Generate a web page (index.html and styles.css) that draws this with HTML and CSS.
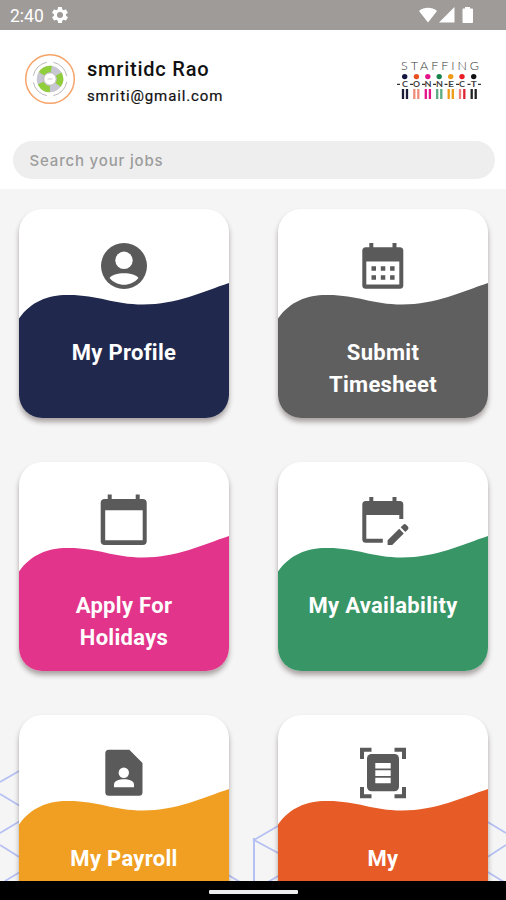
FILE: index.html
```html
<!DOCTYPE html>
<html lang="en">
<head>
    <meta charset="UTF-8">
    <meta name="viewport" content="width=device-width, initial-scale=1.0">
    <title>Staffing Connect</title>
    <link rel="stylesheet" href="styles.css">
</head>
<body>
    <div class="statusbar">
        <span class="time">2:40</span>
        <svg class="gear" width="16" height="16" viewBox="2 2 20 20"><path fill="#fff" d="M19.4 13c0-.3.1-.6.1-1s0-.7-.1-1l2.1-1.600c.2-.2.3-.4.1-.6l-2-3.500c-.1-.2-.4-.3-.6-.2l-2.500 1c-.5-.4-1.100-.7-1.700-1l-.4-2.600c0-.2-.2-.5-.4-.5h-4c-.2 0-.4.200-.5.400l-.4 2.700c-.6.200-1.100.600-1.700 1l-2.500-1c-.2-.1-.5 0-.6.200l-2 3.400c-.1.200-.1.500.1.700L4.500 11c0 .3-.1.600-.1 1s0 .7.1 1l-2.100 1.600c-.2.200-.3.400-.1.600l2 3.500c.1.200.4.300.6.200l2.500-1c.5.400 1.100.7 1.700 1l.4 2.600c0 .2.200.500.500.500h4c.2 0 .5-.2.500-.4l.4-2.700c.6-.2 1.100-.6 1.700-1l2.500 1c.2.100.500 0 .6-.2l2-3.400c.1-.2.1-.5-.1-.7zM12 15.800a3.800 3.800 0 1 1 0-7.600 3.800 3.800 0 0 1 0 7.600z"/></svg>
        <svg class="signals" width="56" height="17" viewBox="0 0 56 17">
            <path fill="#fff" d="M0 4C5-.3 13-.3 18 4L9 15.500z"/>
            <path fill="#fff" d="M35.500 0v15.500H20z"/>
            <path fill="#fff" d="M46 1.500V0h5v1.500h2c.6 0 1 .4 1 1V15c0 .6-.4 1-1 1h-8.500c-.6 0-1-.4-1-1V2.500c0-.6.400-1 1-1z"/>
        </svg>
    </div>

    <div class="header">
        <div class="profile">
            <svg class="avatar" width="52" height="52" viewBox="0 0 52 52">
                <circle cx="26" cy="26" r="24.300" fill="#fff" stroke="#f6a468" stroke-width="1.500"/>
                <circle cx="26" cy="26" r="17" fill="none" stroke="#bbb" stroke-width="1" stroke-dasharray="20 6.700" stroke-dashoffset="-3"/>
                <circle cx="26" cy="26" r="10" fill="none" stroke="#c6c7d2" stroke-width="6.500"/>
                <circle cx="26" cy="26" r="10" fill="none" stroke="#91ce3c" stroke-width="6.500" stroke-dasharray="11.500 9.440" transform="rotate(-30 26 26)"/>
                <circle cx="26" cy="26" r="6.300" fill="#fff" stroke="#999" stroke-width=".8"/>
                <path d="M23.500 26h5" stroke="#ccc" stroke-width="1"/>
            </svg>
            <div class="user">
                <div class="user-name">smritidc Rao</div>
                <div class="user-email">smriti@gmail.com</div>
            </div>
            <svg class="logo" width="88" height="44" viewBox="0 0 88 44">
                <text class="logo-top" x="5" y="12" textLength="78">STAFFING</text>
                <path d="M1 26.300h3M14 26.300h3M26 26.300h3M37 26.300h3M48.500 26.300h3M60 26.300h3M71.500 26.300h3M82 26.300h3" stroke="#333" stroke-width="1.200"/>
                <g class="logo-word">
                    <text x="6" y="28.800" textLength="6" lengthAdjust="spacingAndGlyphs">C</text>
                    <text x="17" y="28.800" textLength="7" lengthAdjust="spacingAndGlyphs">O</text>
                    <text x="28.500" y="28.800" textLength="7" lengthAdjust="spacingAndGlyphs">N</text>
                    <text x="40" y="28.800" textLength="7" lengthAdjust="spacingAndGlyphs">N</text>
                    <text x="52" y="28.800" textLength="6" lengthAdjust="spacingAndGlyphs">E</text>
                    <text x="63" y="28.800" textLength="6" lengthAdjust="spacingAndGlyphs">C</text>
                    <text x="74.700" y="28.800" textLength="6" lengthAdjust="spacingAndGlyphs">T</text>
                </g>
                <circle cx="8.700" cy="18.600" r="2.700" fill="#151541"/>
                <circle cx="20.400" cy="18.600" r="2.700" fill="#e8501f"/>
                <circle cx="31.800" cy="18.600" r="2.700" fill="#e5128a"/>
                <circle cx="43.200" cy="18.600" r="2.700" fill="#16834b"/>
                <circle cx="54.700" cy="18.600" r="2.700" fill="#ee9b16"/>
                <circle cx="66" cy="18.600" r="2.700" fill="#ea1c24"/>
                <circle cx="77.700" cy="18.600" r="2.700" fill="#111"/>
                <g stroke-width="2.300">
                    <path d="M7 31v10M11 31v10" stroke="#1b1c38"/>
                    <path d="M18.300 31v10M22.300 31v10" stroke="#f08c78"/>
                    <path d="M29.800 31v10M33.900 31v10" stroke="#e5128a"/>
                    <path d="M41.200 31v10M45.300 31v10" stroke="#59ab82"/>
                    <path d="M52.700 31v10M56.800 31v10" stroke="#ee9b16"/>
                    <path d="M64 31v10" stroke="#f0807c"/>
                    <path d="M68.300 31v10" stroke="#dc2432"/>
                    <path d="M75.700 31v10M79.700 31v10" stroke="#222"/>
                </g>
            </svg>
        </div>
        <input class="search" type="text" placeholder="Search your jobs">
    </div>

    <div class="content">
        <svg class="pattern" width="506" height="692" viewBox="0 189 506 692">
            <path d="M0 782l20-11.500M0 794l20 12M0 833l20-12M0 845l20 12.500M5 881l15-9M228 875l12 7M278 826l-24 14 26 14M268 882l12-7M486 821l20 12M486 858l20-13M486 871l18 11"/>
            <path d="M254 838v44" stroke-width="2"/>
        </svg>
        <div class="grid">
            <div class="card">
                <svg class="wave" viewBox="0 0 210 209"><path fill="#20294d" d="M0 109.500C12 92.500 29 86 48 86C78 85.500 94 95.500 124 95.500C158 95.500 184 82.500 210 74V209H0z"/></svg>
                <svg class="icon" viewBox="0 0 60 60">
                    <circle cx="30" cy="29" r="23"/>
                    <circle class="hole" cx="30" cy="23.300" r="8.700"/>
                    <path class="hole" d="M15.500 41C19 34.500 41 34.500 44.500 41C37 50 23 50 15.500 41z"/>
                </svg>
                <div class="title">My Profile</div>
            </div>
            <div class="card">
                <svg class="wave" viewBox="0 0 210 209"><path fill="#5f5f5f" d="M0 109.500C12 92.500 29 86 48 86C78 85.500 94 95.500 124 95.500C158 95.500 184 82.500 210 74V209H0z"/></svg>
                <svg class="icon" viewBox="0 0 60 60">
                    <rect x="9.300" y="10.300" width="41" height="41.500" rx="3.500"/>
                    <path d="M16.300 6h4v6h-4zM39.500 6h4v6h-4z"/>
                    <path class="hole" d="M13.300 24.500h33v23h-33z"/>
                    <path d="M18.500 29.300h4.500v4.500h-4.500zM27.800 29.300h4.500v4.500h-4.500zM37.100 29.300h4.500v4.500h-4.500zM18.500 38.300h4.500v4.500h-4.500zM27.800 38.300h4.500v4.500h-4.500zM37.100 38.300h4.500v4.500h-4.500z"/>
                </svg>
                <div class="title">Submit<br>Timesheet</div>
            </div>
            <div class="card">
                <svg class="wave" viewBox="0 0 210 209"><path fill="#e1348a" d="M0 109.500C12 92.500 29 86 48 86C78 85.500 94 95.500 124 95.500C158 95.500 184 82.500 210 74V209H0z"/></svg>
                <svg class="icon" viewBox="0 0 60 60">
                    <rect x="6.700" y="9" width="46" height="46" rx="4"/>
                    <path d="M13.700 4.500h4v6h-4zM41.700 4.500h4v6h-4z"/>
                    <path class="hole" d="M11.200 20.300h37.500v30H11.200z"/>
                </svg>
                <div class="title">Apply For<br>Holidays</div>
            </div>
            <div class="card">
                <svg class="wave" viewBox="0 0 210 209"><path fill="#389566" d="M0 109.500C12 92.500 29 86 48 86C78 85.500 94 95.500 124 95.500C158 95.500 184 82.500 210 74V209H0z"/></svg>
                <svg class="icon" viewBox="0 0 60 60">
                    <path d="M12.800 11h3.500V7h4v4h19.200V7h4v4h3.300a3.500 3.500 0 0 1 3.500 3.500V29h-4v-4h-33v23.700h16.500v4H12.800a3.500 3.500 0 0 1-3.500-3.500V14.500a3.500 3.500 0 0 1 3.500-3.500z"/>
                    <path d="M34.600 55v-4.700l11.600-11.500 4.600 4.600L39.200 55zM47.700 37.300l2.600-2.500a2 2 0 0 1 2.800 0l1.800 1.800a2 2 0 0 1 0 2.800l-2.600 2.500z"/>
                </svg>
                <div class="title">My Availability</div>
            </div>
            <div class="card">
                <svg class="wave" viewBox="0 0 210 209"><path fill="#f09f23" d="M0 109.500C12 92.500 29 86 48 86C78 85.500 94 95.500 124 95.500C158 95.500 184 82.500 210 74V209H0z"/></svg>
                <svg class="icon" viewBox="0 0 60 60">
                    <path d="M14.800 6.700h20.500L48.500 20v29.200a3.500 3.500 0 0 1-3.500 3.500H14.800a3.500 3.500 0 0 1-3.500-3.500v-39a3.500 3.500 0 0 1 3.500-3.500z"/>
                    <circle class="hole" cx="29.800" cy="29.800" r="5.200"/>
                    <path class="hole" d="M20 44.300v-3C20 34.500 40 34.500 40 41.300v3z"/>
                </svg>
                <div class="title">My Payroll</div>
            </div>
            <div class="card">
                <svg class="wave" viewBox="0 0 210 209"><path fill="#e65b26" d="M0 109.500C12 92.500 29 86 48 86C78 85.500 94 95.500 124 95.500C158 95.500 184 82.500 210 74V209H0z"/></svg>
                <svg class="icon" viewBox="0 0 60 60">
                    <path d="M7 4.700h11.500v4H11v7.300H7zM53 4.700H41.500v4H49v7.300h4zM7 55.300h11.500v-4H11V44H7zM53 55.300H41.500v-4H49V44h4z"/>
                    <rect x="14" y="11" width="32" height="37.300" rx="4.500"/>
                    <path class="hole" d="M22.300 20h15.400v5.500H22.300zM22.300 27.300h15.400v5.700H22.300zM22.300 34.700h15.400v5.500H22.300z"/>
                </svg>
                <div class="title">My</div>
            </div>
        </div>
    </div>

    <div class="navbar"><div class="handle"></div></div>
</body>
</html>
```

FILE: styles.css
```css
* {
    box-sizing: border-box;
}
body {
    font-family: Roboto, sans-serif;
    margin: 0;
    height: 900px;
    display: flex;
    flex-direction: column;
    overflow: hidden;
    background-color: #f5f5f5;
}
.statusbar {
    flex: none;
    height: 30px;
    display: flex;
    align-items: center;
    padding: 0 31px 0 10px;
    background-color: #9f9b99;
    color: #fff;
}
.time {
    font-size: 17.5px;
    padding-top: 2px;
    width: 42px;
}
.signals {
    margin-left: auto;
}
.header {
    flex: none;
    height: 159px;
    padding: 22px 11px 0 12.5px;
    background-color: #fff;
}
.profile {
    display: flex;
    height: 88.5px;
    padding: 1px 11px 0 11px;
}
.user {
    padding: 4px 0 0 11.5px;
    color: #111;
}
.user-name {
    font-size: 20px;
    font-weight: 500;
    line-height: 24px;
    letter-spacing: 0.78px;
}
.user-email {
    margin-top: 5px;
    font-size: 15px;
    line-height: 20px;
    letter-spacing: 0.88px;
    -webkit-text-stroke: 0.2px #111;
}
.logo {
    margin: 5px 0 0 auto;
}
.logo-top {
    font-family: Lato, sans-serif;
    font-size: 12.5px;
    font-weight: 300;
    fill: #333;
}
.logo-word {
    font-family: Lato, sans-serif;
    font-size: 7px;
    font-weight: 700;
    fill: #444;
}
.search {
    display: block;
    width: 482px;
    height: 38px;
    padding: 1px 17px 0;
    border: none;
    border-radius: 19px;
    background-color: #eee;
    font-family: Inter, sans-serif;
    font-size: 15px;
    font-weight: 500;
    letter-spacing: 0.82px;
}
.search::placeholder {
    color: #9c9c9c;
}
.content {
    flex: 1;
    min-height: 0;
    position: relative;
    overflow: hidden;
}
.pattern {
    position: absolute;
    top: 0;
    left: 0;
    fill: none;
    stroke: #b6c0f3;
    stroke-width: 1.8;
}
.grid {
    display: grid;
    grid-template-columns: 210px 210px;
    grid-auto-rows: 209px;
    gap: 44px 49px;
    padding: 20px 0 0 19px;
}
.card {
    position: relative;
    display: flex;
    flex-direction: column;
    align-items: center;
    padding-top: 28px;
    border-radius: 23px;
    overflow: hidden;
    background-color: #fff;
    box-shadow: 0 4px 5px rgba(60, 40, 40, 0.4);
}
.wave {
    position: absolute;
    top: 0;
    left: 0;
    width: 210px;
    height: 209px;
}
.icon {
    position: relative;
    width: 60px;
    height: 60px;
    fill: #5a5a5a;
}
.icon .hole {
    fill: #fff;
}
.title {
    position: relative;
    margin-top: 40px;
    color: #fff;
    font-size: 22px;
    font-weight: 700;
    line-height: 32px;
    letter-spacing: 0.3px;
    text-align: center;
}
.navbar {
    flex: none;
    height: 19px;
    display: flex;
    justify-content: center;
    align-items: center;
    background-color: #000;
}
.handle {
    width: 89px;
    height: 4px;
    margin-top: 2px;
    border-radius: 1px;
    background-color: #eee;
}
```
